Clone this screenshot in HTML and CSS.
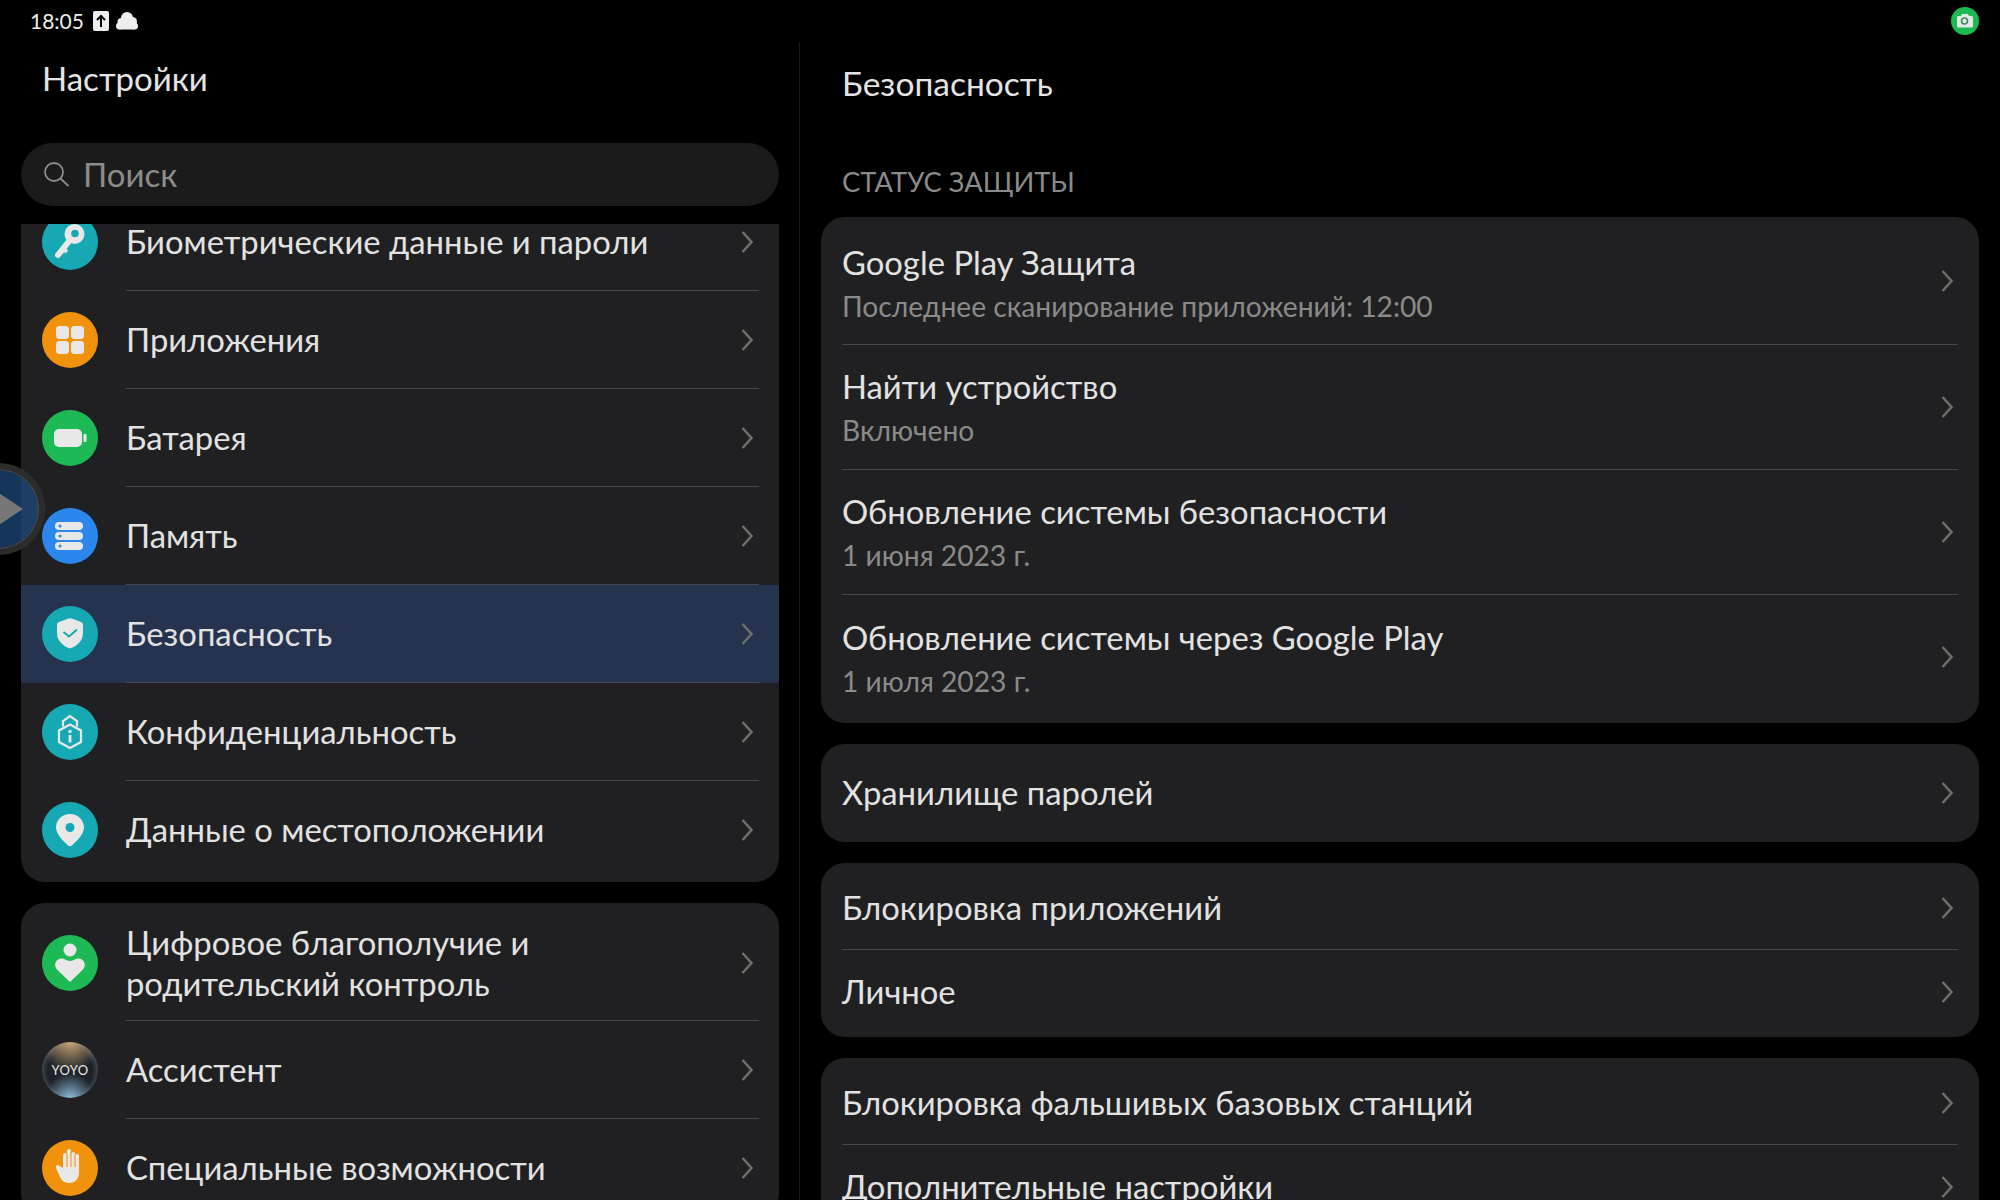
FILE: index.html
```html
<!DOCTYPE html>
<html lang="ru">
  <head>
    <meta charset="UTF-8" />
    <title>Настройки</title>
    <link rel="stylesheet" href="styles.css">
  </head>
  <body>
    <div class="status-bar">
      <div class="status-left">
        <span class="clock">18:05</span>
        <svg class="status-icon" width="16" height="20" viewBox="0 0 16 20"><rect width="16" height="20" rx="2" fill="#eee"/><path d="M8 16V5M4 9l4-4 4 4" fill="none" stroke="#000" stroke-width="2"/></svg>
        <svg class="status-icon" width="22" height="18" viewBox="0 0 22 18"><circle cx="11" cy="6" r="6" fill="#eee"/><circle cx="5.500" cy="10" r="4" fill="#eee"/><circle cx="16.500" cy="9.500" r="4.500" fill="#eee"/><circle cx="3.500" cy="14" r="3.500" fill="#eee"/><circle cx="18.500" cy="14" r="3.500" fill="#eee"/><rect x="3.500" y="10" width="15" height="7.500" fill="#eee"/></svg>
      </div>
      <svg class="record" width="28" height="28" viewBox="0 0 28 28"><circle cx="14" cy="14" r="14" fill="#1db954"/><path d="M6 10.500a1.500 1.500 0 0 1 1.500-1.500H10l1-2h6l1 2h2.500a1.500 1.500 0 0 1 1.500 1.500V19a1.500 1.500 0 0 1-1.500 1.500h-13A1.500 1.500 0 0 1 6 19z" fill="#e4e8e4"/><circle cx="13.500" cy="14" r="3" fill="none" stroke="#3c8a5c" stroke-width="1.500"/></svg>
    </div>

    <div class="panes">
      <div class="left-pane">
        <h1 class="left-title">Настройки</h1>
        <div class="search">
          <svg width="28" height="28" viewBox="0 0 28 28"><circle cx="11" cy="11" r="9" fill="none" stroke="#8c8c8c" stroke-width="1.800"/><path d="M17.500 17.500l8 7.500" stroke="#8c8c8c" stroke-width="1.800"/></svg>
          <span class="search-text">Поиск</span>
        </div>
        <div class="menu-clip">
          <div class="card menu-card scrolled">
            <div class="menu-row">
              <svg class="menu-icon" viewBox="0 0 56 56"><circle cx="28" cy="28" r="28" fill="#17a9b3"/><path d="M28 26L16 41" stroke="#e8e8e8" stroke-width="6" stroke-linecap="round"/><path d="M21 35l4 3" stroke="#e8e8e8" stroke-width="4"/><circle cx="32.500" cy="20" r="10" fill="#e8e8e8"/><circle cx="33" cy="19.500" r="3.800" fill="#17a9b3"/></svg>
              <div class="menu-label">Биометрические данные и пароли</div>
              <svg class="chevron" viewBox="0 0 12 24"><path d="M1.500 2l9 10-9 10"/></svg>
            </div>
            <div class="menu-row">
              <svg class="menu-icon" viewBox="0 0 56 56"><circle cx="28" cy="28" r="28" fill="#f0920c"/><rect x="14" y="14" width="13" height="13" rx="3.500" fill="#e8e8e8"/><rect x="29" y="14" width="13" height="13" rx="3.500" fill="#e8e8e8"/><rect x="14" y="29" width="13" height="13" rx="3.500" fill="#e8e8e8"/><rect x="29" y="29" width="13" height="13" rx="3.500" fill="#e8e8e8"/></svg>
              <div class="menu-label">Приложения</div>
              <svg class="chevron" viewBox="0 0 12 24"><path d="M1.500 2l9 10-9 10"/></svg>
            </div>
            <div class="menu-row">
              <svg class="menu-icon" viewBox="0 0 56 56"><circle cx="28" cy="28" r="28" fill="#1db954"/><rect x="12" y="19" width="28" height="18" rx="5" fill="#e8e8e8"/><rect x="41.500" y="24" width="3" height="8" rx="1" fill="#e8e8e8"/></svg>
              <div class="menu-label">Батарея</div>
              <svg class="chevron" viewBox="0 0 12 24"><path d="M1.500 2l9 10-9 10"/></svg>
            </div>
            <div class="menu-row">
              <svg class="menu-icon" viewBox="0 0 56 56"><circle cx="28" cy="28" r="28" fill="#2b87ec"/><rect x="13" y="14" width="28" height="8" rx="4" fill="#e8e8e8"/><rect x="13" y="24" width="28" height="8" rx="4" fill="#e8e8e8"/><rect x="13" y="34" width="28" height="8" rx="4" fill="#e8e8e8"/><circle cx="18" cy="18" r="1.500" fill="#2b87ec"/><circle cx="18" cy="28" r="1.500" fill="#2b87ec"/><circle cx="18" cy="38" r="1.500" fill="#2b87ec"/></svg>
              <div class="menu-label">Память</div>
              <svg class="chevron" viewBox="0 0 12 24"><path d="M1.500 2l9 10-9 10"/></svg>
            </div>
            <div class="menu-row selected">
              <svg class="menu-icon" viewBox="0 0 56 56"><circle cx="28" cy="28" r="28" fill="#17a9b3"/><path d="M26.500 12.500a4 4 0 0 1 3 0l9.500 3.500a3 3 0 0 1 2 3V27c0 8-6 13-13 15.500C21 40 15 35 15 27v-8a3 3 0 0 1 2-3z" fill="#e8e8e8"/><path d="M21.500 26l5.500 4.500 8-7" fill="none" stroke="#17a9b3" stroke-width="2"/></svg>
              <div class="menu-label">Безопасность</div>
              <svg class="chevron" viewBox="0 0 12 24"><path d="M1.500 2l9 10-9 10"/></svg>
            </div>
            <div class="menu-row">
              <svg class="menu-icon" viewBox="0 0 56 56"><circle cx="28" cy="28" r="28" fill="#17a9b3"/><path d="M21 22.500V17l7-5 7 5v5.500" fill="none" stroke="#e8e8e8" stroke-width="2.200"/><path d="M28 20.500l11 6v11.500l-11 6-11-6V26.500z" fill="none" stroke="#e8e8e8" stroke-width="2.200"/><circle cx="28" cy="27.500" r="1.800" fill="#e8e8e8"/><rect x="26.600" y="31" width="2.800" height="7.500" fill="#e8e8e8"/></svg>
              <div class="menu-label">Конфиденциальность</div>
              <svg class="chevron" viewBox="0 0 12 24"><path d="M1.500 2l9 10-9 10"/></svg>
            </div>
            <div class="menu-row last">
              <svg class="menu-icon" viewBox="0 0 56 56"><circle cx="28" cy="28" r="28" fill="#17a9b3"/><path d="M28 12c8 0 14 6 14 13.500 0 7-8 14-12 18-1 1-3 1-4 0-4-4-12-11-12-18C14 18 20 12 28 12z" fill="#e8e8e8"/><circle cx="28" cy="25.500" r="4.500" fill="#17a9b3"/></svg>
              <div class="menu-label">Данные о местоположении</div>
              <svg class="chevron" viewBox="0 0 12 24"><path d="M1.500 2l9 10-9 10"/></svg>
            </div>
          </div>

          <div class="card menu-card">
            <div class="menu-row tall">
              <svg class="menu-icon" viewBox="0 0 56 56"><circle cx="28" cy="28" r="28" fill="#1db954"/><circle cx="28" cy="15" r="6.500" fill="#e8e8e8"/><path d="M28 47L15.500 35c-6-6 .5-13.500 6.500-11 2.500 1 4.500 2 6 2s3.500-1 6-2c6-2.500 12.500 5 6.500 11z" fill="#e8e8e8"/></svg>
              <div class="menu-label">Цифровое благополучие и<br>родительский контроль</div>
              <svg class="chevron" viewBox="0 0 12 24"><path d="M1.500 2l9 10-9 10"/></svg>
            </div>
            <div class="menu-row">
              <div class="menu-icon yoyo">YOYO</div>
              <div class="menu-label">Ассистент</div>
              <svg class="chevron" viewBox="0 0 12 24"><path d="M1.500 2l9 10-9 10"/></svg>
            </div>
            <div class="menu-row">
              <svg class="menu-icon" viewBox="0 0 56 56"><circle cx="28" cy="28" r="28" fill="#f0920c"/><path d="M21 28V15a2 2 0 0 1 4 0V11a2 2 0 0 1 4 0v3a2 2 0 0 1 4 0v2a2 2 0 0 1 4 0v16c0 7-4 11-9.500 11-5 0-8-2.500-10-7l-3.500-8c-1-2.500 2-4 3.500-2z" fill="#e8e8e8"/><path d="M25 14v13M29 12v15M33 15v12" stroke="#f0920c" stroke-width="1"/></svg>
              <div class="menu-label">Специальные возможности</div>
              <svg class="chevron" viewBox="0 0 12 24"><path d="M1.500 2l9 10-9 10"/></svg>
            </div>
          </div>
        </div>
      </div>

      <div class="right-pane">
        <h1 class="right-title">Безопасность</h1>
        <div class="section-label">СТАТУС ЗАЩИТЫ</div>

        <div class="card detail-card">
          <div class="detail-row two-line first">
            <div class="detail-text">
              <div class="detail-title">Google Play Защита</div>
              <div class="detail-sub">Последнее сканирование приложений: 12:00</div>
            </div>
            <svg class="chevron" viewBox="0 0 12 24"><path d="M1.500 2l9 10-9 10"/></svg>
          </div>
          <div class="detail-row two-line">
            <div class="detail-text">
              <div class="detail-title">Найти устройство</div>
              <div class="detail-sub">Включено</div>
            </div>
            <svg class="chevron" viewBox="0 0 12 24"><path d="M1.500 2l9 10-9 10"/></svg>
          </div>
          <div class="detail-row two-line">
            <div class="detail-text">
              <div class="detail-title">Обновление системы безопасности</div>
              <div class="detail-sub">1 июня 2023 г.</div>
            </div>
            <svg class="chevron" viewBox="0 0 12 24"><path d="M1.500 2l9 10-9 10"/></svg>
          </div>
          <div class="detail-row two-line final">
            <div class="detail-text">
              <div class="detail-title">Обновление системы через Google Play</div>
              <div class="detail-sub">1 июля 2023 г.</div>
            </div>
            <svg class="chevron" viewBox="0 0 12 24"><path d="M1.500 2l9 10-9 10"/></svg>
          </div>
        </div>

        <div class="card detail-card">
          <div class="detail-row single">
            <div class="detail-title">Хранилище паролей</div>
            <svg class="chevron" viewBox="0 0 12 24"><path d="M1.500 2l9 10-9 10"/></svg>
          </div>
        </div>

        <div class="card detail-card">
          <div class="detail-row one-line">
            <div class="detail-title">Блокировка приложений</div>
            <svg class="chevron" viewBox="0 0 12 24"><path d="M1.500 2l9 10-9 10"/></svg>
          </div>
          <div class="detail-row one-line final">
            <div class="detail-title">Личное</div>
            <svg class="chevron" viewBox="0 0 12 24"><path d="M1.500 2l9 10-9 10"/></svg>
          </div>
        </div>

        <div class="card detail-card">
          <div class="detail-row one-line">
            <div class="detail-title">Блокировка фальшивых базовых станций</div>
            <svg class="chevron" viewBox="0 0 12 24"><path d="M1.500 2l9 10-9 10"/></svg>
          </div>
          <div class="detail-row one-line final">
            <div class="detail-title">Дополнительные настройки</div>
            <svg class="chevron" viewBox="0 0 12 24"><path d="M1.500 2l9 10-9 10"/></svg>
          </div>
        </div>
      </div>
    </div>

    <div class="float-button">
      <div class="float-triangle"></div>
    </div>
  </body>
</html>
```

FILE: styles.css
```css
html,
body {
  margin: 0;
  height: 1200px;
  overflow: hidden;
  background: #000;
  color: #e2e2e2;
  font-family: Lato, "Noto Sans", "Liberation Sans", sans-serif;
}

.status-bar {
  height: 42px;
  display: flex;
  align-items: center;
  justify-content: space-between;
  padding: 0 21px 0 30px;
}

.status-left {
  display: flex;
  align-items: center;
  gap: 7px;
}

.clock {
  font-size: 21px;
  color: #eee;
  margin-right: 2px;
  margin-top: -2px;
}

.panes {
  display: flex;
  height: 1158px;
}

.left-pane {
  width: 758px;
  padding-left: 21px;
  padding-right: 20px;
  border-right: 1px solid #1a1a1a;
  flex-shrink: 0;
}

.left-title,
.right-title {
  margin: 0;
  font-weight: 400;
  color: #e4e4e4;
}

.left-title {
  height: 101px;
  line-height: 72px;
  padding-left: 21px;
  box-sizing: border-box;
  font-size: 33px;
}

.search {
  height: 63px;
  border-radius: 32px;
  background: #1b1b1b;
  display: flex;
  align-items: center;
  gap: 12px;
  padding-left: 22px;
  font-size: 33px;
  color: #8c8c8c;
}

.search-text {
  margin-top: -2px;
}

.menu-clip {
  margin-top: 18px;
  height: 976px;
  overflow: hidden;
}

.card {
  background: #202022;
  border-radius: 24px;
}

.menu-card {
  margin-bottom: 21px;
  overflow: hidden;
}

.scrolled {
  margin-top: -31px;
}

.menu-row {
  height: 98px;
  display: flex;
  align-items: center;
  padding-left: 21px;
  padding-right: 20px;
  position: relative;
}

.menu-row.selected {
  background: #26334f;
}

.menu-row.last {
  height: 101px;
  padding-bottom: 3px;
  box-sizing: border-box;
}

.menu-row.tall {
  height: 118px;
  padding-top: 2px;
  box-sizing: border-box;
}

/* separator starts at the label, not at the icon */
.menu-row::after {
  content: "";
  position: absolute;
  left: 105px;
  right: 20px;
  bottom: 0;
  height: 1px;
  background: #48484a;
}

.menu-row.last::after {
  display: none;
}

.menu-icon {
  width: 56px;
  height: 56px;
  flex-shrink: 0;
  margin-right: 28px;
}

.menu-label {
  flex: 1;
  font-size: 32.800px;
  line-height: 41px;
  margin-top: -2px;
}

.menu-row.tall .menu-label {
  margin-top: 0;
}

.chevron {
  width: 12px;
  height: 24px;
  flex-shrink: 0;
  fill: none;
  stroke: #6f6f6f;
  stroke-width: 2.500;
}

.menu-row .chevron {
  margin-right: 6px;
  margin-top: -1px;
}

.yoyo {
  border-radius: 50%;
  display: flex;
  align-items: center;
  justify-content: center;
  font-size: 13px;
  letter-spacing: 0.3px;
  color: #e8e8e8;
  background:
    radial-gradient(circle at 50% 100%, rgba(150, 200, 235, 0.9), transparent 40%),
    radial-gradient(circle at 50% 0, rgba(205, 170, 120, 0.95), transparent 48%),
    radial-gradient(circle at 50% 52%, #1d2128 55%, #68737f 88%, #b5cadc 100%);
}

.right-pane {
  flex: 1;
  padding-left: 21px;
  padding-right: 21px;
  min-width: 0;
}

.right-title {
  height: 85px;
  line-height: 82px;
  padding-left: 21px;
  font-size: 33.500px;
}

.section-label {
  height: 90px;
  line-height: 110px;
  padding-left: 21px;
  font-size: 27.300px;
  color: #8a8a8a;
}

.detail-card {
  margin-bottom: 21px;
}

.detail-row {
  display: flex;
  align-items: center;
  justify-content: space-between;
  padding-left: 21px;
  padding-right: 26px;
  position: relative;
  box-sizing: border-box;
}

.detail-row::after {
  content: "";
  position: absolute;
  left: 21px;
  right: 21px;
  bottom: 0;
  height: 1px;
  background: #48484a;
}

.detail-row.final::after,
.detail-row.single::after {
  display: none;
}

.two-line {
  height: 125px;
  padding-top: 3px;
}

.two-line .chevron {
  margin-top: -5px;
}

.two-line.first {
  height: 128px;
  padding-top: 7px;
}

.two-line.first .chevron {
  margin-top: -7px;
}

.two-line.final {
  height: 128px;
  padding-top: 3px;
  padding-bottom: 2px;
}

.single {
  height: 98px;
}

.one-line {
  height: 87px;
  padding-top: 2px;
}

.one-line.final {
  padding-top: 0;
  padding-bottom: 3px;
}

.detail-title {
  font-size: 32.800px;
  line-height: 42px;
}

.detail-sub {
  font-size: 28.200px;
  line-height: 44px;
  color: #8a8a8a;
}

.float-button {
  position: absolute;
  left: -41px;
  top: 469px;
  width: 78px;
  height: 78px;
  border-radius: 50%;
  background: rgba(32, 75, 130, 0.7);
  border: 1px solid #4d4d4d;
  box-shadow: 0 0 0 5px rgba(40, 40, 40, 0.25), 0 0 0 6px #2e2e2e;
  display: flex;
  align-items: center;
  justify-content: flex-end;
}

.float-triangle {
  width: 0;
  height: 0;
  border-left: 30px solid #777;
  border-top: 20px solid transparent;
  border-bottom: 20px solid transparent;
  margin-right: 15px;
}
```
